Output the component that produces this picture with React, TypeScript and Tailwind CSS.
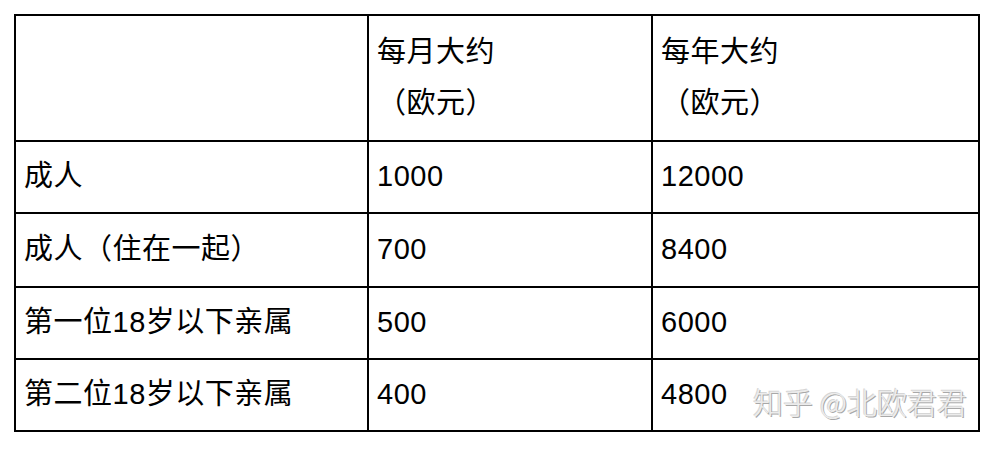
import React from 'react';

interface Row {
  label: string;
  monthly: string;
  yearly: string;
  height: string;
}

const rows: Row[] = [
  { label: '成人', monthly: '1000', yearly: '12000', height: 'h-[72px]' },
  { label: '成人（住在一起）', monthly: '700', yearly: '8400', height: 'h-[74px]' },
  { label: '第一位18岁以下亲属', monthly: '500', yearly: '6000', height: 'h-[72px]' },
  { label: '第二位18岁以下亲属', monthly: '400', yearly: '4800', height: 'h-[72px]' },
];

const cell = 'border-2 border-black px-[8px] align-middle text-left font-normal';

const App: React.FC = () => {
  return (
    <div className="relative w-[994px] h-[450px] bg-white pt-[14px] pl-[14px] font-['Liberation_Sans','Noto_Sans_CJK_SC',sans-serif] text-[29px] tracking-[0.5px] text-black">
      <table className="w-[964px] table-fixed border-collapse">
        <colgroup>
          <col className="w-[353px]" />
          <col className="w-[284px]" />
          <col className="w-[327px]" />
        </colgroup>
        <thead>
          <tr className="h-[126px]">
            <th className={cell}></th>
            <th className={`${cell} leading-[51px]`}>
              每月大约
              <br />
              （欧元）
            </th>
            <th className={`${cell} leading-[51px]`}>
              每年大约
              <br />
              （欧元）
            </th>
          </tr>
        </thead>
        <tbody>
          {rows.map((row) => (
            <tr key={row.label} className={row.height}>
              <td className={cell}>{row.label}</td>
              <td className={cell}>{row.monthly}</td>
              <td className={cell}>{row.yearly}</td>
            </tr>
          ))}
        </tbody>
      </table>

      {/* watermark */}
      <div className="absolute left-[753px] top-[386px] text-[30px] font-light leading-none tracking-normal text-[#ececec] [text-shadow:1px_1px_0_#a8a8a8,-1px_-1px_0_#d6d6d6] font-['Noto_Sans_CJK_SC',sans-serif]">
        知乎 @北欧君君
      </div>
    </div>
  );
};

export default App;
